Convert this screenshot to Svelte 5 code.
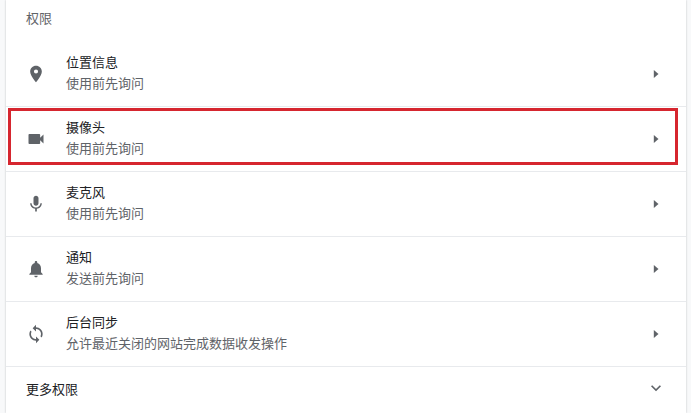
<script>
    // Строки списка разрешений
    const rows = [
        { id: 'location', title: '位置信息', sub: '使用前先询问' },
        { id: 'camera', title: '摄像头', sub: '使用前先询问', marked: true },
        { id: 'mic', title: '麦克风', sub: '使用前先询问' },
        { id: 'bell', title: '通知', sub: '发送前先询问' },
        { id: 'sync', title: '后台同步', sub: '允许最近关闭的网站完成数据收发操作' }
    ];
</script>

<div class="page">
    <div class="card">
        <div class="heading">权限</div>

        {#each rows as row, i}
            <div class="row" class:first={i === 0}>
                <svg class="icon" viewBox="0 0 24 24">
                    {#if row.id === 'location'}
                        <path d="M12 2C8.13 2 5 5.13 5 9c0 5.25 7 13 7 13s7-7.75 7-13c0-3.87-3.13-7-7-7zm0 9.5a2.5 2.5 0 0 1 0-5 2.5 2.5 0 0 1 0 5z" />
                    {:else if row.id === 'camera'}
                        <path d="M17 10.5V7c0-.55-.45-1-1-1H4c-.55 0-1 .45-1 1v10c0 .55.45 1 1 1h12c.55 0 1-.45 1-1v-3.5l4 4v-11l-4 4z" />
                    {:else if row.id === 'mic'}
                        <path d="M12 14c1.66 0 2.99-1.34 2.99-3L15 5c0-1.66-1.34-3-3-3S9 3.34 9 5v6c0 1.66 1.34 3 3 3zm5.3-3c0 3-2.54 5.1-5.3 5.1S6.700 14 6.700 11H5c0 3.41 2.720 6.230 6 6.720V21h2v-3.280c3.280-.480 6-3.300 6-6.720h-1.700z" />
                    {:else if row.id === 'bell'}
                        <path d="M12 22c1.100 0 2-.9 2-2h-4c0 1.100.9 2 2 2zm6-6v-5c0-3.070-1.630-5.640-4.500-6.320V4c0-.83-.67-1.500-1.500-1.500s-1.500.67-1.500 1.500v.68C7.640 5.360 6 7.920 6 11v5l-2 2v1h16v-1l-2-2z" />
                    {:else}
                        <path d="M12 4V1L8 5l4 4V6c3.310 0 6 2.690 6 6 0 1.010-.25 1.970-.7 2.800l1.460 1.460C19.540 15.030 20 13.570 20 12c0-4.420-3.580-8-8-8zm0 14c-3.310 0-6-2.690-6-6 0-1.010.25-1.970.7-2.800L5.240 7.740C4.460 8.970 4 10.430 4 12c0 4.420 3.580 8 8 8v3l4-4-4-4v3z" />
                    {/if}
                </svg>
                <div class="text">
                    <div class="title">{row.title}</div>
                    <div class="sub">{row.sub}</div>
                </div>
                <svg class="arrow" viewBox="0 0 20 20" width="20" height="20">
                    <path d="M7.800 6 12.500 10l-4.700 4z" />
                </svg>
                {#if row.marked}
                    <div class="mark"></div>
                {/if}
            </div>
        {/each}

        <div class="more">
            <span>更多权限</span>
            <svg class="chevron" viewBox="0 0 24 24" width="20" height="20">
                <path d="M7.410 8.590 12 13.170l4.590-4.580L18 10l-6 6-6-6z" />
            </svg>
        </div>
    </div>
</div>

<style>
    :global(body) {
        margin: 0;
        background: #f8f9fa;
    }

    .page {
        height: 413px;
        overflow: hidden;
        padding: 0 5px 0 6px;
        font-family: "Liberation Sans", "Noto Sans CJK SC", sans-serif;
    }

    .card {
        background: #fff;
        height: 413px;
        box-shadow: 0 0 2px rgba(60, 64, 67, 0.3);
    }

    .heading {
        height: 41px;
        box-sizing: border-box;
        padding: 10px 0 0 20px;
        font-size: 13px;
        line-height: 17px;
        color: #5f6368;
    }

    .row {
        position: relative;
        display: flex;
        align-items: center;
        height: 65px;
        box-sizing: border-box;
        padding: 0 20px;
        border-top: 1px solid #e8eaed;
    }

    .row.first {
        border-top: 1px solid transparent;
    }

    .icon {
        fill: #5f6368;
        width: 20px;
        height: 20px;
        flex: none;
    }

    .text {
        flex: 1;
        margin: 0 0 1px 20px;
    }

    .title {
        font-size: 13px;
        line-height: 20px;
        color: #202124;
    }

    .sub {
        font-size: 13px;
        line-height: 20px;
        margin-top: 1px;
        color: #5f6368;
    }

    .arrow {
        fill: #5f6368;
        flex: none;
    }

    .mark {
        position: absolute;
        left: 2px;
        top: 1px;
        width: 664px;
        height: 51px;
        border: 3px solid #d6262f;
    }

    .more {
        display: flex;
        align-items: center;
        justify-content: space-between;
        height: 47px;
        box-sizing: border-box;
        padding: 0 20px 4px;
        border-top: 1px solid #e8eaed;
        font-size: 13px;
        color: #202124;
    }

    .chevron {
        fill: #5f6368;
    }
</style>
